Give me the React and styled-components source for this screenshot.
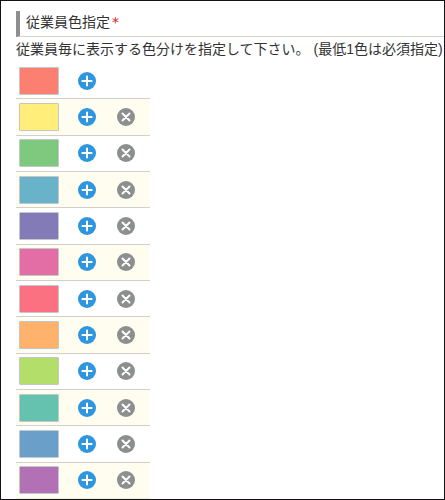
import React, { useState } from "react";
import styled, { createGlobalStyle } from "styled-components";

const GlobalStyle = createGlobalStyle`
  *, *::before, *::after {
    box-sizing: border-box;
  }
  body {
    margin: 0;
    background: #fff;
    color: #333;
    font-family: "Liberation Sans", "Noto Sans CJK JP", sans-serif;
    font-size: 14px;
    line-height: 20px;
  }
`;

const Frame = styled.main`
  display: flex;
  flex-direction: column;
  min-height: 100vh;
  border: 1px solid #151215;
  padding-top: 10px;
  padding-left: 15px;
`;

const Heading = styled.h2`
  display: flex;
  gap: 2px;
  margin: 0;
  padding: 0 0 4px 6px;
  height: 26px;
  border-left: 4px solid #8e8e8e;
  border-bottom: 1px solid #d6d2cc;
  font-size: 14px;
  font-weight: 400;
  line-height: 22px;
`;

const Required = styled.span`
  color: #e02020;
  font-family: "DejaVu Sans", sans-serif;
`;

const Description = styled.p`
  margin: 2px 0 4px;
  white-space: nowrap;
`;

const ColorList = styled.ul`
  flex: 1;
  display: grid;
  grid-auto-rows: 1fr;
  width: 134px;
  margin: 0;
  padding: 0;
  list-style: none;
`;

const ColorRow = styled.li`
  display: flex;
  align-items: center;
  gap: 21px;
  min-height: 36px;
  padding-left: 3px;
  border-bottom: 1px solid #d3cfcb;

  &:nth-child(even) {
    background: #fffdf0;
  }
  &:last-child {
    border-bottom-color: #f0eee8;
  }
`;

const Swatch = styled.input`
  appearance: none;
  width: 40px;
  height: 28px;
  margin: 0;
  padding: 0;
  border: 1px solid #c3c7c9;
  border-radius: 1px;
  background: none;
  cursor: pointer;

  &::-webkit-color-swatch-wrapper {
    padding: 0;
  }
  &::-webkit-color-swatch {
    border: 0;
    border-radius: 0;
  }
`;

const Actions = styled.div`
  display: flex;
  gap: 21px;
  margin-left: -2px;
`;

const IconButton = styled.button`
  display: flex;
  width: 18px;
  height: 18px;
  padding: 0;
  border: 0;
  border-radius: 50%;
  background: ${({ $tone }) => ($tone === "add" ? "#2e96de" : "#8b8f8d")};
  cursor: pointer;
`;

const Glyph = styled.svg`
  width: 18px;
  height: 18px;
  fill: none;
  stroke: #fff;
  stroke-width: 2;
  stroke-linecap: round;
`;

const initialColors = [
  "#fb8072", "#ffef7a", "#7fc97f", "#69b3ca",
  "#827bb8", "#e26ea5", "#fb7182", "#ffb26b",
  "#b3de69", "#65c2ae", "#699fc8", "#b371b5",
];

export default function App() {
  const [colors, setColors] = useState(initialColors);

  const change = (index, value) =>
    setColors(colors.map((color, i) => (i === index ? value : color)));
  const add = (index) => setColors(colors.toSpliced(index + 1, 0, colors[index]));
  const remove = (index) => setColors(colors.filter((_, i) => i !== index));

  return (
    <>
      <GlobalStyle />
      <Frame>
        <Heading>
          従業員色指定
          <Required>*</Required>
        </Heading>
        <Description>
          従業員毎に表示する色分けを指定して下さい。 (最低1色は必須指定)
        </Description>
        <ColorList>
          {colors.map((color, index) => (
            <ColorRow key={index}>
              <Swatch
                type="color"
                value={color}
                aria-label={`色 ${index + 1}`}
                onChange={(event) => change(index, event.target.value)}
              />
              <Actions>
                <IconButton $tone="add" type="button" aria-label="追加" onClick={() => add(index)}>
                  <Glyph viewBox="0 0 18 18">
                    <path d="M9 4.4v9.2M4.4 9h9.2" />
                  </Glyph>
                </IconButton>
                {index > 0 && (
                  <IconButton $tone="remove" type="button" aria-label="削除" onClick={() => remove(index)}>
                    <Glyph viewBox="0 0 18 18">
                      <path d="M5.5 5.5l7 7M12.5 5.5l-7 7" />
                    </Glyph>
                  </IconButton>
                )}
              </Actions>
            </ColorRow>
          ))}
        </ColorList>
      </Frame>
    </>
  );
}
